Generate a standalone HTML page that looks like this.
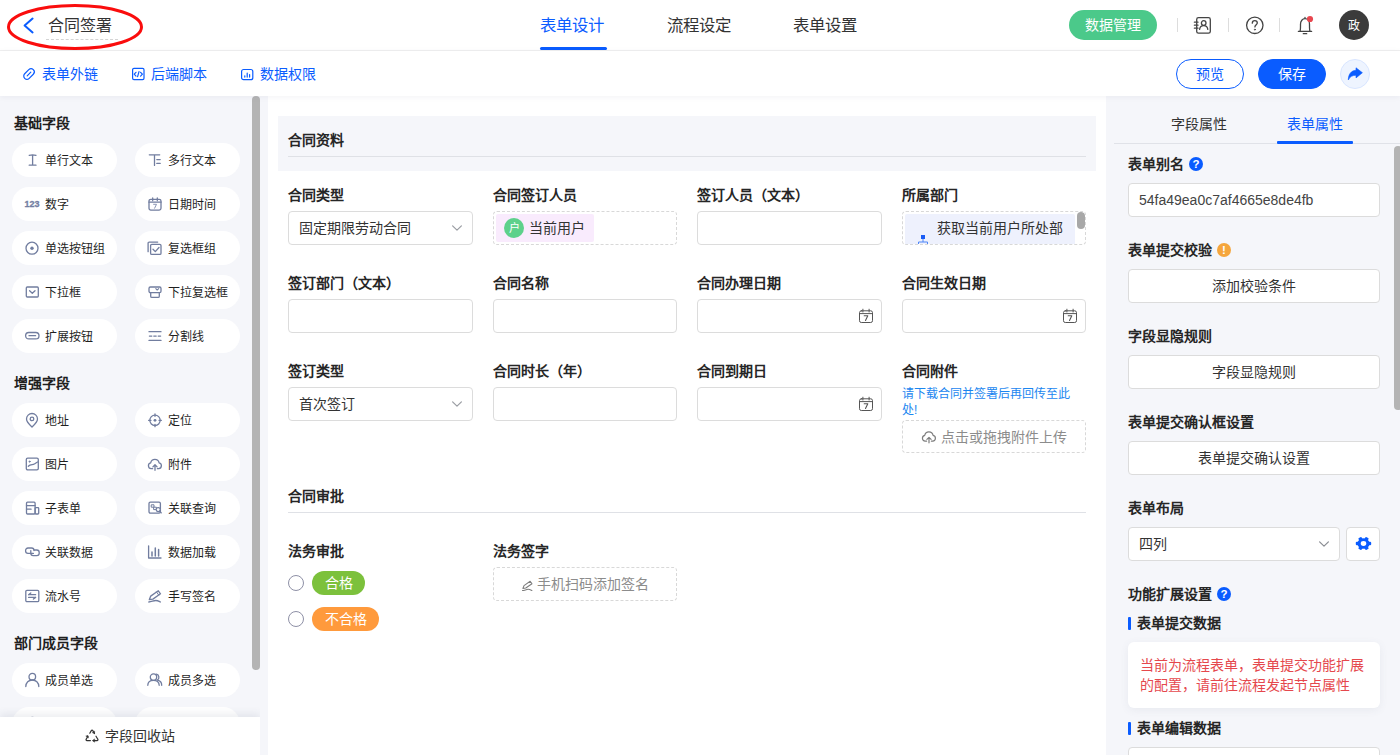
<!DOCTYPE html>
<html lang="zh-CN">
<head>
<meta charset="utf-8">
<title>合同签署 - 表单设计</title>
<style>
*{box-sizing:border-box;margin:0;padding:0}
html,body{width:1400px;height:755px;overflow:hidden}
body{font-family:"Liberation Sans",sans-serif;font-size:14px;color:#333;background:#f5f6fa;position:relative;line-height:20px}
svg{display:block;overflow:visible}
.abs{position:absolute}

/* ---------- top header ---------- */
#header{position:absolute;left:0;top:0;width:1400px;height:51px;background:#fff;border-bottom:1px solid #f0f0f0}
#back{position:absolute;left:21px;top:16px}
#title{position:absolute;left:46px;top:14px;width:72px;height:26px;padding-left:2px;font-size:16px;line-height:23px;color:#333;border-bottom:1px dashed #d4d4d4;white-space:nowrap}
#mark{position:absolute;left:6px;top:3px}
.tab{position:absolute;top:14px;font-size:16.400px;line-height:23px;color:#333;white-space:nowrap}
.tab.on{color:#0a5cff}
#tabline{position:absolute;left:540px;top:47px;width:67px;height:3px;border-radius:2px;background:#0a5cff}
#datamgr{position:absolute;left:1069px;top:10px;width:88px;height:30px;border-radius:15px;background:#4bc98a;color:#fff;font-size:14px;line-height:30px;text-align:center}
.vsep{position:absolute;top:18px;width:1px;height:14px;background:#dddddd}
#avatar{position:absolute;left:1339px;top:10px;width:30px;height:30px;border-radius:15px;background:#3b3b3b;color:#fff;font-size:12px;line-height:32px;text-align:center}

/* ---------- second toolbar ---------- */
#toolbar{position:absolute;left:0;top:51px;width:1400px;height:44.500px;background:#fff;box-shadow:0 1px 6px rgba(30,40,80,.06);z-index:5}
.tlink{position:absolute;top:13px;font-size:14px;line-height:20px;color:#0a5cff;white-space:nowrap}
.tlink svg{position:absolute;left:-20.200px;top:3px}
.pill{position:absolute;top:8px;height:30px;border-radius:15px;font-size:14px;line-height:28px;text-align:center}
#preview{left:1176px;width:68px;border:1px solid #0a5cff;color:#0a5cff;background:#fff}
#save{left:1258px;width:68px;border:1px solid #0a5cff;color:#fff;background:#0a5cff}
#share{position:absolute;left:1340px;top:8px;width:30px;height:30px;border-radius:15px;background:#eef4ff;border:1px solid #d9e6ff}

/* ---------- left panel ---------- */
#left{position:absolute;left:0;top:96px;width:260px;height:659px;background:#f5f6fa;overflow:hidden}
#left h3{position:absolute;left:14px;font-size:14px;line-height:20px;font-weight:bold;color:#1f1f1f;white-space:nowrap}
.fp{position:absolute;width:105px;height:34px;border-radius:17px;background:#fff;font-size:12px;line-height:36px;color:#1f1f1f;padding-left:32px;white-space:nowrap}
.fp.c1{left:12px;padding-left:32.600px}.fp.c2{left:135px;padding-left:32.500px}
.fp svg{position:absolute;left:12px;top:9px;fill:none;stroke:#717d9f;stroke-width:1.300;stroke-linecap:round;stroke-linejoin:round}
.fp.c2 svg{left:12.300px}
.fp b{position:absolute;left:12.500px;top:0;font-size:9px;line-height:34px;color:#737ea2;-webkit-text-stroke:.3px #737ea2}
#lscroll{position:absolute;left:252px;top:0;width:8px;height:574px;border-radius:4px;background:#b4b4b4}
#recycle{position:absolute;left:0;top:621px;width:260px;height:38px;background:#fff;box-shadow:0 -3px 8px rgba(60,70,100,.10);font-size:14px;line-height:38px;color:#333}
#recycle span{position:absolute;left:105px;top:0}
#recycle svg{position:absolute;left:84px;top:11px}

/* ---------- canvas ---------- */
#canvas{position:absolute;left:268px;top:96px;width:838px;height:659px;background:#fff}
.sec{position:absolute;left:10px;width:818px}
.sec h2{position:absolute;left:10px;font-size:14px;line-height:20px;font-weight:bold;color:#262626;white-space:nowrap}
.sec hr{position:absolute;left:10px;width:798px;height:1px;border:0;background:#dfe1e6}
.fld{position:absolute;width:185px}
.fld label{position:absolute;left:0;top:0;font-size:14px;line-height:20px;font-weight:bold;color:#262626;white-space:nowrap}
.inp{position:absolute;left:0;top:26px;width:185px;height:34px;border:1px solid #dcdcdc;border-radius:4px;background:#fff;font-size:14px;line-height:32px;color:#333;padding-left:10px;white-space:nowrap;overflow:hidden}
.inp.dash{border-style:dashed;border-color:#d8d8d8}
.inp svg{position:absolute}
.w4 .inp{width:184px}
.chip{position:absolute;border-radius:2px;font-size:14px;color:#333}
.chip svg{position:absolute}
.av{position:absolute;left:8px;top:4px;width:20px;height:20px;border-radius:10px;background:#5dd18b;color:#fff;font-style:normal;font-size:11px;line-height:20px;text-align:center}
.tip{position:absolute;left:0;top:25px;width:176px;font-size:12px;line-height:16px;color:#1b86f0}
.upl{color:#8c8c8c}
.radio{position:absolute;left:0;width:16px;height:16px;border-radius:8px;border:1px solid #8e90a6;background:#fff}
.tag{position:absolute;left:24px;height:24px;border-radius:12px;color:#fff;font-size:14px;line-height:24px;text-align:center}

/* ---------- right panel ---------- */
#right{position:absolute;left:1106px;top:96px;width:294px;height:659px;background:#f5f6fa;overflow:hidden}
.rtab{position:absolute;top:18px;font-size:14px;line-height:20px;color:#333;white-space:nowrap}
.rtab.on{color:#0a5cff}
#rline{position:absolute;left:8px;top:47px;width:286px;height:1px;background:#e0e2e8}
#rline2{position:absolute;left:171px;top:45px;width:76px;height:3px;background:#0a5cff;border-radius:1px}
#rscroll{position:absolute;left:288px;top:50px;width:8px;height:264px;border-radius:4px;background:#b4b4b4}
.rh{position:absolute;left:22px;font-size:14px;line-height:20px;font-weight:bold;color:#262626;white-space:nowrap}
.rh i{position:absolute;top:3px;width:14px;height:14px;border-radius:7px;color:#fff;font-style:normal;font-size:11.500px;line-height:14.500px;text-align:center;font-weight:bold}
.rbox{position:absolute;left:22px;width:252px;height:34px;border:1px solid #dcdcdc;border-radius:4px;background:#fff;font-size:14px;line-height:32px;color:#333;text-align:center;white-space:nowrap}
.rsub{position:absolute;left:22px;padding-left:9px;font-size:14px;line-height:20px;font-weight:bold;color:#262626;white-space:nowrap}
.rsub:before{content:"";position:absolute;left:0;top:4px;width:3px;height:13px;border-radius:1px;background:#0a5cff}
.rcard{position:absolute;left:22px;width:252px;background:#fff;border-radius:6px;box-shadow:0 2px 8px rgba(80,90,120,.08);padding:14px 12px;font-size:14px;line-height:19.500px;color:#e5484d}
</style>
</head>
<body>

<div id="header">
  <svg id="back" width="14" height="18" viewBox="0 0 14 18"><path d="M11.6 2.6 L3.6 9.5 L11.6 16.4" fill="none" stroke="#0a5cff" stroke-width="2" stroke-linecap="round" stroke-linejoin="round"/></svg>
  <div id="title">合同签署</div>
  <svg id="mark" width="138" height="48" viewBox="0 0 138 48"><ellipse cx="69" cy="24" rx="66.5" ry="21.5" fill="none" stroke="#fa0d0d" stroke-width="3"/></svg>

  <div class="tab on" style="left:540px">表单设计</div>
  <div class="tab" style="left:667px">流程设定</div>
  <div class="tab" style="left:793px">表单设置</div>
  <div id="tabline"></div>

  <div id="datamgr">数据管理</div>
  <div class="vsep" style="left:1177px"></div>
  <div class="vsep" style="left:1228px"></div>
  <div class="vsep" style="left:1279px"></div>
  <svg class="abs" style="left:1192px;top:15px" width="22" height="22" viewBox="0 0 22 22" fill="none" stroke="#444" stroke-width="1.3" stroke-linecap="round" stroke-linejoin="round">
    <rect x="4.7" y="2.6" width="13.6" height="15.6" rx="1.8"/>
    <path d="M2.4 7.2h3.6M2.4 10.2h3.6M2.4 13.2h3.6"/>
    <circle cx="11.7" cy="8" r="2.3"/>
    <path d="M7.6 14.4c0.3-2.4 2-3.7 4.1-3.7s3.8 1.3 4.1 3.7"/>
  </svg>
  <svg class="abs" style="left:1244px;top:15px" width="22" height="22" viewBox="0 0 22 22" fill="none" stroke="#444" stroke-width="1.3" stroke-linecap="round" stroke-linejoin="round">
    <circle cx="10.8" cy="10.3" r="8.2"/>
    <path d="M8.3 8.2c0-1.5 1.1-2.5 2.5-2.5s2.5 1 2.5 2.3c0 1.6-2.4 1.9-2.4 3.9"/>
    <circle cx="10.9" cy="14.6" r="0.6" fill="#444" stroke-width="0.6"/>
  </svg>
  <svg class="abs" style="left:1294px;top:14px" width="22" height="22" viewBox="0 0 22 22" fill="none" stroke="#444" stroke-width="1.3" stroke-linecap="round" stroke-linejoin="round">
    <path d="M4.4 17.4h13.2M5.9 17.4c0.700-1.400 0.600-3.200 0.600-7.400c0-3 2-5.300 4.500-5.300s4.500 2.300 4.500 5.300c0 4.200-0.100 6 0.600 7.400M11 3.400v1.200M9.300 19.700h3.400"/>
    <circle cx="16" cy="5" r="3.100" fill="#e8474f" stroke="none"/>
  </svg>
  <div id="avatar">政</div>
</div>

<div id="toolbar">
  <div class="tlink" style="left:42px"><svg width="14" height="14" viewBox="0 0 14 14" fill="none" stroke="#0a5cff" stroke-width="1.200" stroke-linecap="round"><rect x="3.800" y="0.900" width="6.400" height="12.200" rx="3.200" transform="rotate(45 7 7)"/><path d="M5.200 8.800l3.600-3.600" /></svg>表单外链</div>
  <div class="tlink" style="left:151px"><svg width="14" height="14" viewBox="0 0 14 14" fill="none" stroke="#0a5cff" stroke-width="1.200" stroke-linecap="round" stroke-linejoin="round"><rect x="1.600" y="1.300" width="11.400" height="11.400" rx="1.400"/><path d="M5 5.300l-1.800 1.900 1.800 1.900M9.600 5.300l1.800 1.900-1.800 1.900M8 4.600l-1.400 5"/></svg>后端脚本</div>
  <div class="tlink" style="left:260px"><svg width="14" height="14" viewBox="0 0 14 14" fill="none" stroke="#0a5cff" stroke-width="1.200" stroke-linecap="round" stroke-linejoin="round"><rect x="1.600" y="2.500" width="11.200" height="10.200" rx="2"/><path d="M4.800 8.800v1.300M7.200 6.200v3.900M9.600 7.600v2.500"/></svg>数据权限</div>
  <div class="pill" id="preview">预览</div>
  <div class="pill" id="save">保存</div>
  <div id="share"><svg width="28" height="28" viewBox="1 1 28 28"><path d="M16 8.800L22.400 13.700L16 18.900V16.300C12.500 16.300 9.800 17.600 8.300 21C8.300 15.500 11 11.600 16 11.300Z" fill="#0a5cff" stroke="#0a5cff" stroke-width="0.600" stroke-linejoin="round"/></svg></div>
</div>

<div id="left">
  <h3 style="top:17px">基础字段</h3>
  <div class="fp c1" style="top:47px"><svg width="16" height="16" viewBox="0 0 16 16"><path d="M5.200 3.300c1.200-.4 2.100-.4 3.400-.4s2.200 0 3.400.4M8.600 2.900v10.300M5.200 13.200h6.800"/></svg>单行文本</div>
  <div class="fp c2" style="top:47px"><svg width="16" height="16" viewBox="0 0 16 16"><path d="M2.300 2.800h10.400M7.500 2.800v10.600M9.800 7.600h3.400M9.800 11.400h3.400"/></svg>多行文本</div>
  <div class="fp c1" style="top:91px"><b>123</b>数字</div>
  <div class="fp c2" style="top:91px"><svg width="16" height="16" viewBox="0 0 16 16"><rect x="2" y="3.300" width="12" height="10.800" rx="1.800"/><path d="M2 6.200h12M5.700 1.900v2.600M10.300 1.900v2.600"/><path d="M6.600 8.300h2.900l-1.900 3.900" stroke-width="1" stroke="#8b96b4"/></svg>日期时间</div>
  <div class="fp c1" style="top:135px"><svg width="16" height="16" viewBox="0 0 16 16"><circle cx="8" cy="8.200" r="6"/><circle cx="8" cy="8.200" r="1.700" fill="#6f7c9f" stroke="none"/></svg>单选按钮组</div>
  <div class="fp c2" style="top:135px"><svg width="16" height="16" viewBox="0 0 16 16"><path d="M1.100 11.700v-8.600a1 1 0 0 1 1-1h8.600"/><rect x="3.600" y="4.400" width="10.400" height="10" rx="1.200"/><path d="M6 9.300l2.300 2.300 3.700-4.100"/></svg>复选框组</div>
  <div class="fp c1" style="top:179px"><svg width="16" height="16" viewBox="0 0 16 16"><rect x="2.300" y="3" width="12" height="10" rx="1"/><path d="M5.600 6.800l2.700 2.500 2.700-2.500"/></svg>下拉框</div>
  <div class="fp c2" style="top:179px"><svg width="16" height="16" viewBox="0 0 16 16"><rect x="2" y="3" width="12" height="5.600" rx="1.400"/><path d="M3.700 8.600v3.600a1.200 1.200 0 0 0 1.200 1.200h6.200a1.200 1.200 0 0 0 1.200-1.200v-3.600"/><path d="M8.800 4.600l1.400 1.400 1.500-1.400" stroke-width="1.100"/></svg>下拉复选框</div>
  <div class="fp c1" style="top:223px"><svg width="16" height="16" viewBox="0 0 16 16"><rect x="1.600" y="4.500" width="13.400" height="6.400" rx="3.200"/><path d="M5 7.700h6.600"/></svg>扩展按钮</div>
  <div class="fp c2" style="top:223px"><svg width="16" height="16" viewBox="0 0 16 16"><path d="M2 3.700h12M2 12.400h12"/><path d="M2.400 8.100h2.400M6.800 8.100h2.400M11.200 8.100h2.400"/></svg>分割线</div>
  <h3 style="top:277px">增强字段</h3>
  <div class="fp c1" style="top:307px"><svg width="16" height="16" viewBox="0 0 16 16"><path d="M8 15c-2.800-2.600-5.500-5-5.500-8a5.500 5.500 0 0 1 11 0c0 3-2.700 5.400-5.500 8z"/><circle cx="8" cy="6.900" r="1.800"/></svg>地址</div>
  <div class="fp c2" style="top:307px"><svg width="16" height="16" viewBox="0 0 16 16"><circle cx="8" cy="8.300" r="5.200"/><path d="M8 1.900v2.400M8 12.300v2.400M1.600 8.300h2.400M12 8.300h2.400"/><circle cx="8" cy="8.300" r="1.400" fill="#6f7c9f" stroke="none"/></svg>定位</div>
  <div class="fp c1" style="top:351px"><svg width="16" height="16" viewBox="0 0 16 16"><rect x="2.300" y="2.100" width="12" height="11.800" rx="1.400"/><path d="M4.300 10.200c2.200-2.200 4.200-1.200 6-2.200 1.200-.7 2-1.400 3.300-2"/><circle cx="5.600" cy="5.600" r=".7" fill="#6f7c9f" stroke-width=".6"/></svg>图片</div>
  <div class="fp c2" style="top:351px"><svg width="16" height="16" viewBox="0 0 16 16"><path d="M5.600 12.700h-1.400a3 3 0 0 1-.5-5.900 4.300 4.300 0 0 1 8.400 0 3 3 0 0 1-.4 5.900h-1.300"/><path d="M8 14.300v-5.300M5.900 10.900l2.100-2.100 2.100 2.100"/></svg>附件</div>
  <div class="fp c1" style="top:395px"><svg width="16" height="16" viewBox="0 0 16 16"><rect x="2.500" y="2.200" width="8.600" height="11.800" rx="1"/><path d="M2.500 5.700h8.600M2.500 9.200h4.600"/><rect x="11.100" y="7.600" width="3.600" height="6.400" rx=".8"/></svg>子表单</div>
  <div class="fp c2" style="top:395px"><svg width="16" height="16" viewBox="0 0 16 16"><rect x="2" y="2.200" width="11.400" height="11" rx="1.400"/><rect x="4.600" y="4.800" width="2.400" height="2.400" stroke-width="1"/><rect x="7" y="7.200" width="2.400" height="2.400" stroke-width="1"/><circle cx="11.200" cy="9.600" r="2" fill="#fff" stroke-width="1.100"/><path d="M12.700 11.200l1.600 1.700"/></svg>关联查询</div>
  <div class="fp c1" style="top:439px"><svg width="16" height="16" viewBox="0 0 16 16"><path d="M9.400 9.400h-5.400a2.400 2.400 0 0 1-2.400-2.400v-.6a2.400 2.400 0 0 1 2.400-2.400h3.600a2.400 2.400 0 0 1 2.400 2.400v.2"/><path d="M6.800 6.600v2.600a2.400 2.400 0 0 0 2.400 2.400h3.600a2.400 2.400 0 0 0 2.400-2.400v-.8a2.400 2.400 0 0 0-2.400-2.400h-2.600"/></svg>关联数据</div>
  <div class="fp c2" style="top:439px"><svg width="16" height="16" viewBox="0 0 16 16"><path d="M1.600 1.800v12.200h12.400"/><path d="M5 8v4M8.300 4v8M11.600 5.600v6.400" stroke-width="1.500"/></svg>数据加载</div>
  <div class="fp c1" style="top:483px"><svg width="16" height="16" viewBox="0 0 16 16"><rect x="1.800" y="2.300" width="13" height="11.400" rx="1.200"/><path d="M4.600 6.700h7M6.800 5l-2.200 1.700M4.600 9.400h7M9.400 11.100l2.200-1.700"/></svg>流水号</div>
  <div class="fp c2" style="top:483px"><svg width="16" height="16" viewBox="0 0 16 16"><path d="M2.300 11.700l1.400-3.600 7.600-5.300 2.200 3-7.600 5.300z"/><path d="M9.500 4l2.200 3" stroke-width="1"/><path d="M1.800 14c2.800 0 4.400-1.500 7-1.500 2 0 3 .7 4.600 1.500"/></svg>手写签名</div>
  <h3 style="top:537px">部门成员字段</h3>
  <div class="fp c1" style="top:567px"><svg width="16" height="16" viewBox="0 0 16 16"><circle cx="8.300" cy="4.700" r="3.300"/><path d="M1.800 14.600c0-4 2.900-6.600 6.500-6.600s6.500 2.600 6.500 6.600"/></svg>成员单选</div>
  <div class="fp c2" style="top:567px"><svg width="16" height="16" viewBox="0 0 16 16"><circle cx="6.500" cy="5.100" r="3.200"/><path d="M.8 13.300c0-3.400 2.600-5 5.700-5s5.700 1.600 5.700 5"/><path d="M9.400 2.200a3.200 3.200 0 0 1 .9 5.900c2.700.4 4.400 2.300 4.400 5.200"/></svg>成员多选</div>
  <div class="fp c1" style="top:611px"><svg width="16" height="16" viewBox="0 0 16 16"><circle cx="8.300" cy="4.700" r="3.300"/><path d="M1.800 14.600c0-4 2.900-6.600 6.500-6.600s6.500 2.600 6.500 6.600"/></svg>部门单选</div>
  <div class="fp c2" style="top:611px"><svg width="16" height="16" viewBox="0 0 16 16"><circle cx="6.500" cy="5.100" r="3.200"/><path d="M.8 13.300c0-3.400 2.600-5 5.700-5s5.700 1.600 5.700 5"/><path d="M9.400 2.200a3.200 3.200 0 0 1 .9 5.900c2.700.4 4.400 2.300 4.400 5.200"/></svg>部门多选</div>
  <div id="lscroll"></div>
  <div id="recycle"><svg width="16" height="16" viewBox="0 0 16 16" fill="none" stroke="#333" stroke-width="1.200" stroke-linecap="round" stroke-linejoin="round"><path d="M5.800 5.200l1.500-2.600a.9.900 0 0 1 1.500 0l1.700 2.900"/><path d="M12 8.200l1.800 3a.9.900 0 0 1-.8 1.400h-3.800"/><path d="M6.400 12.600h-3.400a.9.900 0 0 1-.8-1.400l1.600-2.800"/><path d="M10.600 3.600l-.1 2-1.800-.8zM10.300 11.200l-1.800 1.400 1.800 1.300zM2.200 8l1.800-.4.400 1.900z" fill="#333" stroke-width=".6"/></svg><span>字段回收站</span></div>
</div>


<div id="canvas">
  <div class="sec" style="top:20px;height:55px;background:#f5f6fa"><h2 style="top:14px">合同资料</h2><hr style="top:40px"></div>
  <div class="fld" style="left:20px;top:89px"><label>合同类型</label><div class="inp">固定期限劳动合同<svg style="right:9px;top:11px" width="12" height="10" viewBox="0 0 12 10"><path d="M1.600 2.800l4.400 4.400 4.400-4.400" fill="none" stroke="#9a9da3" stroke-width="1.200" stroke-linecap="round" stroke-linejoin="round"/></svg></div></div>
  <div class="fld w4" style="left:225px;top:89px"><label>合同签订人员</label><div class="inp dash" style="padding:0"><span class="chip" style="left:2px;top:2px;width:98px;height:28px;background:#f9ebfd"><i class="av">户</i><span style="position:absolute;left:33px;top:0;line-height:29px">当前用户</span></span></div></div>
  <div class="fld" style="left:429px;top:89px"><label>签订人员（文本）</label><div class="inp"></div></div>
  <div class="fld w4" style="left:634px;top:89px"><label>所属部门</label><div class="inp dash" style="padding:0"><span class="chip" style="left:2px;top:2px;width:170px;height:36px;background:#eef1fd"><svg style="left:11px;top:19px" width="14" height="14" viewBox="0 0 14 14"><rect x="5" y="2" width="4" height="4" fill="#1a5cf5"/><path d="M7 6v3M2.500 12v-3h9v3" fill="none" stroke="#4f86f7" stroke-width="1"/></svg><span style="position:absolute;left:32px;top:0;line-height:29px">获取当前用户所处部</span></span><span class="abs" style="right:0;top:0;width:8px;height:17px;border-radius:4px;background:#a8a8a8"></span></div></div>
  <div class="fld" style="left:20px;top:177px"><label>签订部门（文本）</label><div class="inp"></div></div>
  <div class="fld w4" style="left:225px;top:177px"><label>合同名称</label><div class="inp"></div></div>
  <div class="fld" style="left:429px;top:177px"><label>合同办理日期</label><div class="inp"><svg style="right:7px;top:8px" width="16" height="16" viewBox="0 0 16 16" fill="none" stroke="#555" stroke-width="1" stroke-linecap="round" stroke-linejoin="round"><rect x="1.500" y="2.800" width="13" height="11.700" rx="1.800"/><path d="M1.500 5.600h13M4.900 1.200v2.800M11.100 1.200v2.800"/><path d="M6.200 7.800h3.600l-2.300 4.700" stroke-width="1.100"/></svg></div></div>
  <div class="fld w4" style="left:634px;top:177px"><label>合同生效日期</label><div class="inp"><svg style="right:7px;top:8px" width="16" height="16" viewBox="0 0 16 16" fill="none" stroke="#555" stroke-width="1" stroke-linecap="round" stroke-linejoin="round"><rect x="1.500" y="2.800" width="13" height="11.700" rx="1.800"/><path d="M1.500 5.600h13M4.900 1.200v2.800M11.100 1.200v2.800"/><path d="M6.200 7.800h3.600l-2.300 4.700" stroke-width="1.100"/></svg></div></div>
  <div class="fld" style="left:20px;top:265px"><label>签订类型</label><div class="inp">首次签订<svg style="right:9px;top:11px" width="12" height="10" viewBox="0 0 12 10"><path d="M1.600 2.800l4.400 4.400 4.400-4.400" fill="none" stroke="#9a9da3" stroke-width="1.200" stroke-linecap="round" stroke-linejoin="round"/></svg></div></div>
  <div class="fld w4" style="left:225px;top:265px"><label>合同时长（年）</label><div class="inp"></div></div>
  <div class="fld" style="left:429px;top:265px"><label>合同到期日</label><div class="inp"><svg style="right:7px;top:8px" width="16" height="16" viewBox="0 0 16 16" fill="none" stroke="#555" stroke-width="1" stroke-linecap="round" stroke-linejoin="round"><rect x="1.500" y="2.800" width="13" height="11.700" rx="1.800"/><path d="M1.500 5.600h13M4.900 1.200v2.800M11.100 1.200v2.800"/><path d="M6.200 7.800h3.600l-2.300 4.700" stroke-width="1.100"/></svg></div></div>
  <div class="fld w4" style="left:634px;top:265px"><label>合同附件</label><p class="tip">请下载合同并签署后再回传至此处!</p><div class="inp dash upl" style="top:58.500px;height:33.500px"><svg style="left:18px;top:8px" width="16" height="16" viewBox="0 0 16 16" fill="none" stroke="#7d7d7d" stroke-width="1.200" stroke-linecap="round" stroke-linejoin="round"><path d="M5.600 12.200h-1.400a3 3 0 0 1-.5-5.900 4.300 4.300 0 0 1 8.400 0 3 3 0 0 1-.4 5.900h-1.300"/><path d="M8 13.800v-5.300M5.900 10.400l2.100-2.100 2.100 2.100"/></svg><span style="position:absolute;left:38px;top:0">点击或拖拽附件上传</span></div></div>
  <div class="sec" style="top:376px;height:55px"><h2 style="top:14px">合同审批</h2><hr style="top:40px"></div>
  <div class="fld" style="left:20px;top:445px"><label>法务审批</label><span class="radio" style="top:34px"></span><span class="tag" style="top:30px;width:53px;background:#7cc13c">合格</span><span class="radio" style="top:70px"></span><span class="tag" style="top:66px;width:67px;background:#ff9a3c">不合格</span></div>
  <div class="fld w4" style="left:225px;top:445px"><label>法务签字</label><div class="inp dash upl" style="height:34px"><svg style="left:27px;top:11px" width="13" height="13" viewBox="0 0 16 16" fill="none" stroke="#7d7d7d" stroke-width="1.300" stroke-linecap="round" stroke-linejoin="round"><path d="M2.300 11.700l1.400-3.600 7.600-5.300 2.200 3-7.600 5.300z"/><path d="M1.800 14.200c2.800 0 4.400-1.500 7-1.500 2 0 3 .7 4.600 1.500"/></svg><span style="position:absolute;left:43px;top:0">手机扫码添加签名</span></div></div>
</div>


<div id="right">
  <div class="rtab" style="left:65px">字段属性</div>
  <div class="rtab on" style="left:181px">表单属性</div>
  <div id="rline"></div><div id="rline2"></div>
  <div id="rscroll"></div>

  <div class="rh" style="top:58px">表单别名<i style="left:61px;background:#0a5cff">?</i></div>
  <div class="rbox" style="top:87px;text-align:left;padding-left:10px;color:#444">54fa49ea0c7af4665e8de4fb</div>

  <div class="rh" style="top:144px">表单提交校验<i style="left:89px;background:#f5a63d">!</i></div>
  <div class="rbox" style="top:173px">添加校验条件</div>

  <div class="rh" style="top:230px">字段显隐规则</div>
  <div class="rbox" style="top:259px">字段显隐规则</div>

  <div class="rh" style="top:316px">表单提交确认框设置</div>
  <div class="rbox" style="top:345px">表单提交确认设置</div>

  <div class="rh" style="top:402px">表单布局</div>
  <div class="rbox" style="top:431px;width:212px;text-align:left;padding-left:10px">四列<svg class="abs" style="right:9px;top:11px" width="12" height="10" viewBox="0 0 12 10"><path d="M1.600 2.800l4.400 4.400 4.400-4.400" fill="none" stroke="#8a8d93" stroke-width="1.200" stroke-linecap="round" stroke-linejoin="round"/></svg></div>
  <div class="rbox" style="top:431px;left:240px;width:34px"><svg class="abs" style="left:7.700px;top:6.900px" width="17" height="17" viewBox="-8.500 -8.500 17 17" fill="#0a5cff"><g transform="scale(1,.88)"><circle r="4.400" fill="none" stroke="#0a5cff" stroke-width="3.200"/><rect x="4.300" y="-1.900" width="3.400" height="3.800" rx="1.100" transform="rotate(0)"/><rect x="4.300" y="-1.900" width="3.400" height="3.800" rx="1.100" transform="rotate(60)"/><rect x="4.300" y="-1.900" width="3.400" height="3.800" rx="1.100" transform="rotate(120)"/><rect x="4.300" y="-1.900" width="3.400" height="3.800" rx="1.100" transform="rotate(180)"/><rect x="4.300" y="-1.900" width="3.400" height="3.800" rx="1.100" transform="rotate(240)"/><rect x="4.300" y="-1.900" width="3.400" height="3.800" rx="1.100" transform="rotate(300)"/></g></svg></div>

  <div class="rh" style="top:488px">功能扩展设置<i style="left:89px;background:#0a5cff">?</i></div>
  <div class="rsub" style="top:517px">表单提交数据</div>
  <div class="rcard" style="top:546px;height:66px">当前为流程表单，表单提交功能扩展的配置，请前往流程发起节点属性</div>
  <div class="rsub" style="top:622px">表单编辑数据</div>
  <div class="rbox" style="top:651px;height:60px"></div>
</div>


</body>
</html>
